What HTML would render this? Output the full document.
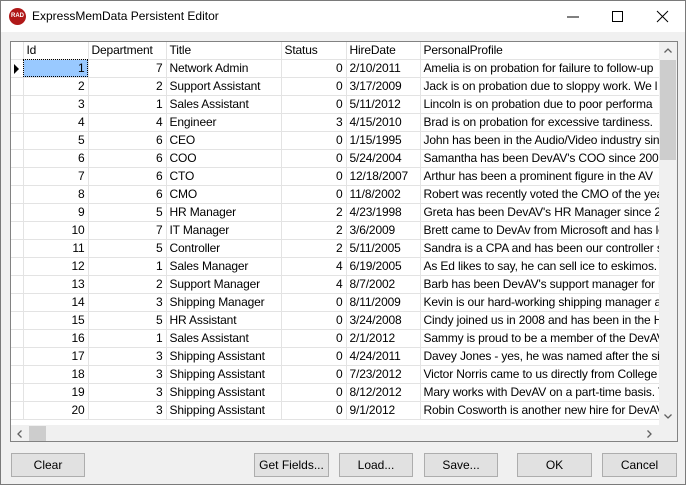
<!DOCTYPE html>
<html><head><meta charset="utf-8"><style>
*{box-sizing:border-box;margin:0;padding:0}
body{width:686px;height:485px;overflow:hidden;font-family:"Liberation Sans",sans-serif;font-size:12px;color:#000;background:#f0f0f0;position:relative}
.win{position:absolute;left:0;top:0;width:686px;height:485px;border:1px solid #7a7a7a;background:#f0f0f0}
.tb{position:absolute;left:0;top:0;width:684px;height:31px;background:#fff}
.logo{position:absolute;left:8px;top:7px;width:17px;height:17px;border-radius:50%;background:#b01818;color:#fff;font-size:6px;font-weight:bold;text-align:center;line-height:17px}
.ttl{position:absolute;left:31px;top:8px;font-size:12px}
.grid{position:absolute;left:9px;top:40px;width:668px;height:401px;border:1px solid #828282;background:#fff;overflow:hidden}
table{position:absolute;left:0;top:0;border-collapse:collapse;table-layout:fixed;width:648px;letter-spacing:-0.15px}
td{height:18px;border-right:1px solid #e3e3e3;border-bottom:1px solid #e3e3e3;white-space:nowrap;overflow:hidden;padding:0 3px;line-height:17px}
td.r{text-align:right}
tr.h td{height:17px;line-height:16px}
td.ind{border-right:1px solid #e3e3e3;padding:0;position:relative}
.vs{position:absolute;left:648px;top:0;width:18px;height:383px;background:#f0f0f0}
.vth{position:absolute;left:1px;top:18px;width:16px;height:100px;background:#cdcdcd}
.hs{position:absolute;left:0;top:383px;width:648px;height:17px;background:#f0f0f0}
.hth{position:absolute;left:18px;top:1px;width:17px;height:15px;background:#cdcdcd}
.corner{position:absolute;left:648px;top:383px;width:18px;height:17px;background:#f0f0f0}
.btn{position:absolute;top:452px;height:24px;border:1px solid #adadad;background:#e1e1e1;text-align:center;line-height:22px}
.sel{background:#99c9ff;outline:1px dotted #000;outline-offset:-1px}
</style></head><body>
<div class="win">
<div class="tb"><div class="logo">RAD</div><div class="ttl">ExpressMemData Persistent Editor</div>
<svg style="position:absolute;left:554px;top:9px" width="120" height="14"><line x1="12" y1="7" x2="24" y2="7" stroke="#000"/><rect x="57.5" y="1.5" width="10" height="10" fill="none" stroke="#000"/><path d="M102 1 L113 12 M113 1 L102 12" stroke="#000"/></svg></div>
<div class="grid">
<table>
<colgroup><col style="width:12px"><col style="width:65px"><col style="width:78px"><col style="width:115px"><col style="width:65px"><col style="width:74px"><col style="width:239px"></colgroup>
<tr class="h"><td class="ind"></td><td>Id</td><td>Department</td><td>Title</td><td>Status</td><td>HireDate</td><td>PersonalProfile</td></tr>
<tr><td class="ind"><svg width="10" height="18" style="position:absolute;left:2px;top:0"><path d="M1 4 L6 9 L1 14Z" fill="#000"/></svg></td><td class="r sel">1</td><td class="r">7</td><td>Network Admin</td><td class="r">0</td><td>2/10/2011</td><td>Amelia is on probation for failure to follow-up</td></tr>
<tr><td class="ind"></td><td class="r">2</td><td class="r">2</td><td>Support Assistant</td><td class="r">0</td><td>3/17/2009</td><td>Jack is on probation due to sloppy work. We l</td></tr>
<tr><td class="ind"></td><td class="r">3</td><td class="r">1</td><td>Sales Assistant</td><td class="r">0</td><td>5/11/2012</td><td>Lincoln is on probation due to poor performa</td></tr>
<tr><td class="ind"></td><td class="r">4</td><td class="r">4</td><td>Engineer</td><td class="r">3</td><td>4/15/2010</td><td>Brad is on probation for excessive tardiness.&nbsp; W</td></tr>
<tr><td class="ind"></td><td class="r">5</td><td class="r">6</td><td>CEO</td><td class="r">0</td><td>1/15/1995</td><td>John has been in the Audio/Video industry sin</td></tr>
<tr><td class="ind"></td><td class="r">6</td><td class="r">6</td><td>COO</td><td class="r">0</td><td>5/24/2004</td><td>Samantha has been DevAV's COO since 2009.</td></tr>
<tr><td class="ind"></td><td class="r">7</td><td class="r">6</td><td>CTO</td><td class="r">0</td><td>12/18/2007</td><td>Arthur has been a prominent figure in the AV</td></tr>
<tr><td class="ind"></td><td class="r">8</td><td class="r">6</td><td>CMO</td><td class="r">0</td><td>11/8/2002</td><td>Robert was recently voted the CMO of the yea</td></tr>
<tr><td class="ind"></td><td class="r">9</td><td class="r">5</td><td>HR Manager</td><td class="r">2</td><td>4/23/1998</td><td>Greta has been DevAV's HR Manager since 200</td></tr>
<tr><td class="ind"></td><td class="r">10</td><td class="r">7</td><td>IT Manager</td><td class="r">2</td><td>3/6/2009</td><td>Brett came to DevAv from Microsoft and has le</td></tr>
<tr><td class="ind"></td><td class="r">11</td><td class="r">5</td><td>Controller</td><td class="r">2</td><td>5/11/2005</td><td>Sandra is a CPA and has been our controller si</td></tr>
<tr><td class="ind"></td><td class="r">12</td><td class="r">1</td><td>Sales Manager</td><td class="r">4</td><td>6/19/2005</td><td>As Ed likes to say, he can sell ice to eskimos. H</td></tr>
<tr><td class="ind"></td><td class="r">13</td><td class="r">2</td><td>Support Manager</td><td class="r">4</td><td>8/7/2002</td><td>Barb has been DevAV's support manager for n</td></tr>
<tr><td class="ind"></td><td class="r">14</td><td class="r">3</td><td>Shipping Manager</td><td class="r">0</td><td>8/11/2009</td><td>Kevin is our hard-working shipping manager a</td></tr>
<tr><td class="ind"></td><td class="r">15</td><td class="r">5</td><td>HR Assistant</td><td class="r">0</td><td>3/24/2008</td><td>Cindy joined us in 2008 and has been in the H</td></tr>
<tr><td class="ind"></td><td class="r">16</td><td class="r">1</td><td>Sales Assistant</td><td class="r">0</td><td>2/1/2012</td><td>Sammy is proud to be a member of the DevAV</td></tr>
<tr><td class="ind"></td><td class="r">17</td><td class="r">3</td><td>Shipping Assistant</td><td class="r">0</td><td>4/24/2011</td><td>Davey Jones - yes, he was named after the sin</td></tr>
<tr><td class="ind"></td><td class="r">18</td><td class="r">3</td><td>Shipping Assistant</td><td class="r">0</td><td>7/23/2012</td><td>Victor Norris came to us directly from College</td></tr>
<tr><td class="ind"></td><td class="r">19</td><td class="r">3</td><td>Shipping Assistant</td><td class="r">0</td><td>8/12/2012</td><td>Mary works with DevAV on a part-time basis. T</td></tr>
<tr><td class="ind"></td><td class="r">20</td><td class="r">3</td><td>Shipping Assistant</td><td class="r">0</td><td>9/1/2012</td><td>Robin Cosworth is another new hire for DevAV</td></tr>
</table>
<div class="vs"><div class="vth"></div>
<svg style="position:absolute;left:5px;top:6px" width="8" height="5"><path d="M0.5 4.5 L4 1 L7.5 4.5" stroke="#606060" fill="none" stroke-width="1.3"/></svg>
<svg style="position:absolute;left:5px;top:372px" width="8" height="5"><path d="M0.5 0.5 L4 4 L7.5 0.5" stroke="#606060" fill="none" stroke-width="1.3"/></svg></div>
<div class="hs"><div class="hth"></div>
<svg style="position:absolute;left:6px;top:5px" width="5" height="8"><path d="M4.5 0.5 L1 4 L4.5 7.5" stroke="#606060" fill="none" stroke-width="1.3"/></svg>
<svg style="position:absolute;left:636px;top:5px" width="5" height="8"><path d="M0.5 0.5 L4 4 L0.5 7.5" stroke="#606060" fill="none" stroke-width="1.3"/></svg></div>
<div class="corner"></div>
</div>
<div class="btn" style="left:10px;width:74px">Clear</div>
<div class="btn" style="left:253px;width:75px">Get Fields...</div>
<div class="btn" style="left:338px;width:74px">Load...</div>
<div class="btn" style="left:423px;width:74px">Save...</div>
<div class="btn" style="left:516px;width:75px">OK</div>
<div class="btn" style="left:601px;width:75px">Cancel</div>
</div>
</body></html>
